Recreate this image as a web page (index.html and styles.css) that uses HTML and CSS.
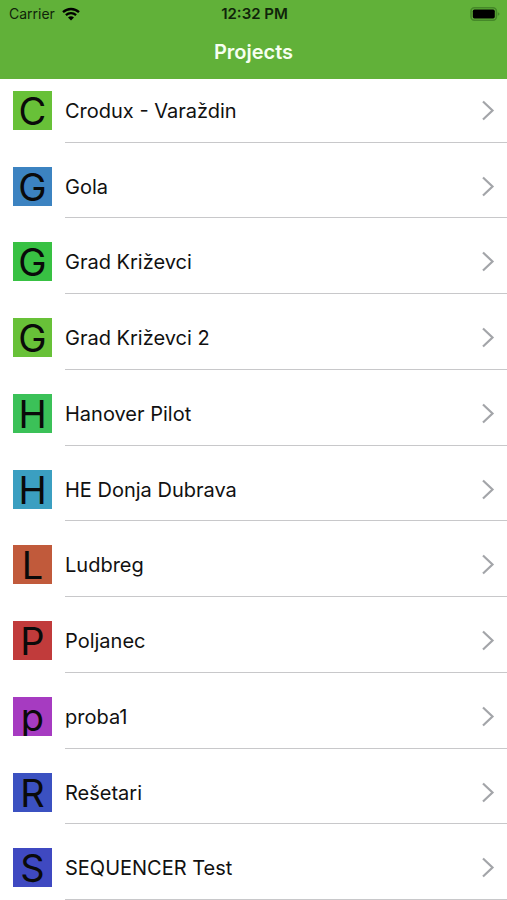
FILE: index.html
```html
<!DOCTYPE html>
<html lang="hr">
<head>
    <meta charset="UTF-8">
    <meta name="viewport" content="width=device-width, initial-scale=1">
    <title>Projects</title>
    <link rel="stylesheet" href="styles.css">
</head>
<body>
    <header class="header">
        <div class="status-bar">
            <div class="status-left">
                <span>Carrier</span>
                <svg class="wifi" viewBox="0 0 18 14" aria-hidden="true">
                    <path d="M1 5.2a11.6 11.6 0 0 1 16 0M3.9 8.2a7.5 7.5 0 0 1 10.2 0" fill="none" stroke="#000" stroke-width="2.3"/>
                    <path d="M9 13.6L6 10.6a4.4 4.4 0 0 1 6 0z"/>
                </svg>
            </div>
            <div class="status-time">12:32 PM</div>
            <div class="status-right">
                <svg class="battery" viewBox="0 0 30 14" aria-hidden="true">
                    <rect x="1" y="0.8" width="25.4" height="12.4" rx="3.4" fill="none" stroke="#458829" stroke-width="1.6"/>
                    <rect x="2.8" y="2.6" width="22" height="8.8" rx="1.6"/>
                    <path d="M27.8 5.2v3.6q1.7-.5 1.7-1.8t-1.7-1.8z" fill="#458829"/>
                </svg>
            </div>
        </div>
        <h1 class="header-title">Projects</h1>
    </header>

    <main class="project-list">
        <a class="project" href="#crodux">
            <span class="avatar lime">C</span>
            <span class="project-body"><span class="project-name">Crodux - Varaždin</span><svg class="chevron" viewBox="0 0 14 22" aria-hidden="true"><path d="M2 2l9.5 9L2 20"/></svg></span>
        </a>
        <a class="project" href="#gola">
            <span class="avatar blue">G</span>
            <span class="project-body"><span class="project-name">Gola</span><svg class="chevron" viewBox="0 0 14 22" aria-hidden="true"><path d="M2 2l9.5 9L2 20"/></svg></span>
        </a>
        <a class="project" href="#krizevci">
            <span class="avatar green">G</span>
            <span class="project-body"><span class="project-name">Grad Križevci</span><svg class="chevron" viewBox="0 0 14 22" aria-hidden="true"><path d="M2 2l9.5 9L2 20"/></svg></span>
        </a>
        <a class="project" href="#krizevci2">
            <span class="avatar lime">G</span>
            <span class="project-body"><span class="project-name">Grad Križevci 2</span><svg class="chevron" viewBox="0 0 14 22" aria-hidden="true"><path d="M2 2l9.5 9L2 20"/></svg></span>
        </a>
        <a class="project" href="#hanover">
            <span class="avatar emerald">H</span>
            <span class="project-body"><span class="project-name">Hanover Pilot</span><svg class="chevron" viewBox="0 0 14 22" aria-hidden="true"><path d="M2 2l9.5 9L2 20"/></svg></span>
        </a>
        <a class="project" href="#dubrava">
            <span class="avatar cyan">H</span>
            <span class="project-body"><span class="project-name">HE Donja Dubrava</span><svg class="chevron" viewBox="0 0 14 22" aria-hidden="true"><path d="M2 2l9.5 9L2 20"/></svg></span>
        </a>
        <a class="project" href="#ludbreg">
            <span class="avatar orange">L</span>
            <span class="project-body"><span class="project-name">Ludbreg</span><svg class="chevron" viewBox="0 0 14 22" aria-hidden="true"><path d="M2 2l9.5 9L2 20"/></svg></span>
        </a>
        <a class="project" href="#poljanec">
            <span class="avatar red">P</span>
            <span class="project-body"><span class="project-name">Poljanec</span><svg class="chevron" viewBox="0 0 14 22" aria-hidden="true"><path d="M2 2l9.5 9L2 20"/></svg></span>
        </a>
        <a class="project" href="#proba1">
            <span class="avatar avatar-clip purple">p</span>
            <span class="project-body"><span class="project-name">proba1</span><svg class="chevron" viewBox="0 0 14 22" aria-hidden="true"><path d="M2 2l9.5 9L2 20"/></svg></span>
        </a>
        <a class="project" href="#resetari">
            <span class="avatar royal">R</span>
            <span class="project-body"><span class="project-name">Rešetari</span><svg class="chevron" viewBox="0 0 14 22" aria-hidden="true"><path d="M2 2l9.5 9L2 20"/></svg></span>
        </a>
        <a class="project" href="#sequencer">
            <span class="avatar indigo">S</span>
            <span class="project-body"><span class="project-name">SEQUENCER Test</span><svg class="chevron" viewBox="0 0 14 22" aria-hidden="true"><path d="M2 2l9.5 9L2 20"/></svg></span>
        </a>
    </main>
</body>
</html>
```
FILE: styles.css
```css
* {
    box-sizing: border-box;
}

body {
    margin: 0;
    min-height: 100vh;
    display: flex;
    flex-direction: column;
    font-family: Inter, "Liberation Sans", sans-serif;
    background-color: #ffffff;
    color: #111111;
}

.header {
    background-color: #61b139;
    padding-bottom: 14px;
}

.status-bar {
    display: grid;
    grid-template-columns: 1fr auto 1fr;
    align-items: center;
    height: 27px;
    padding: 0 7px 0 9px;
    font-size: 14px;
    color: #10240a;
}

.status-left {
    display: flex;
    align-items: center;
    gap: 7px;
}

.status-time {
    font-size: 15px;
    font-weight: 600;
}

.status-right {
    display: flex;
    justify-content: flex-end;
}

.wifi {
    width: 18px;
    height: 14px;
}

.battery {
    width: 30px;
    height: 14px;
}

.header-title {
    margin: 12px 0 0;
    font-size: 20px;
    line-height: 26px;
    font-weight: 600;
    text-align: center;
    color: #f6fff0;
}

.project-list {
    flex: 1;
    display: flex;
    flex-direction: column;
}

/* rows share whatever height is left in the window */
.project {
    flex: 1 0 auto;
    display: flex;
    gap: 13px;
    padding: 24px 0 0 13px;
    color: inherit;
    text-decoration: none;
}

.project:first-child {
    padding-top: 12px;
}

.avatar {
    flex: none;
    width: 39px;
    height: 39px;
    font-size: 38px;
    line-height: 41px;
    text-align: center;
    color: #0a0a0a;
}

/* letters with a descender end at the tile's edge */
.avatar-clip {
    overflow: hidden;
}

.project-body {
    flex: 1;
    display: flex;
    align-items: flex-start;
    justify-content: space-between;
    padding: 0 12px 9px 0;
    border-bottom: 1px solid #c8c8ca;
}

.project-name {
    font-size: 20px;
    line-height: 41px;
}

.chevron {
    width: 14px;
    height: 39px;
}

.chevron path {
    fill: none;
    stroke: #a3a5a9;
    stroke-width: 2.2;
}

.lime { background-color: #68c138; }
.blue { background-color: #3c83c1; }
.green { background-color: #38c143; }
.emerald { background-color: #3bc158; }
.cyan { background-color: #3b9fc1; }
.orange { background-color: #c15a3b; }
.red { background-color: #c13b3b; }
.purple { background-color: #a63bc1; }
.royal { background-color: #3b51c1; }
.indigo { background-color: #3f49c1; }
```
